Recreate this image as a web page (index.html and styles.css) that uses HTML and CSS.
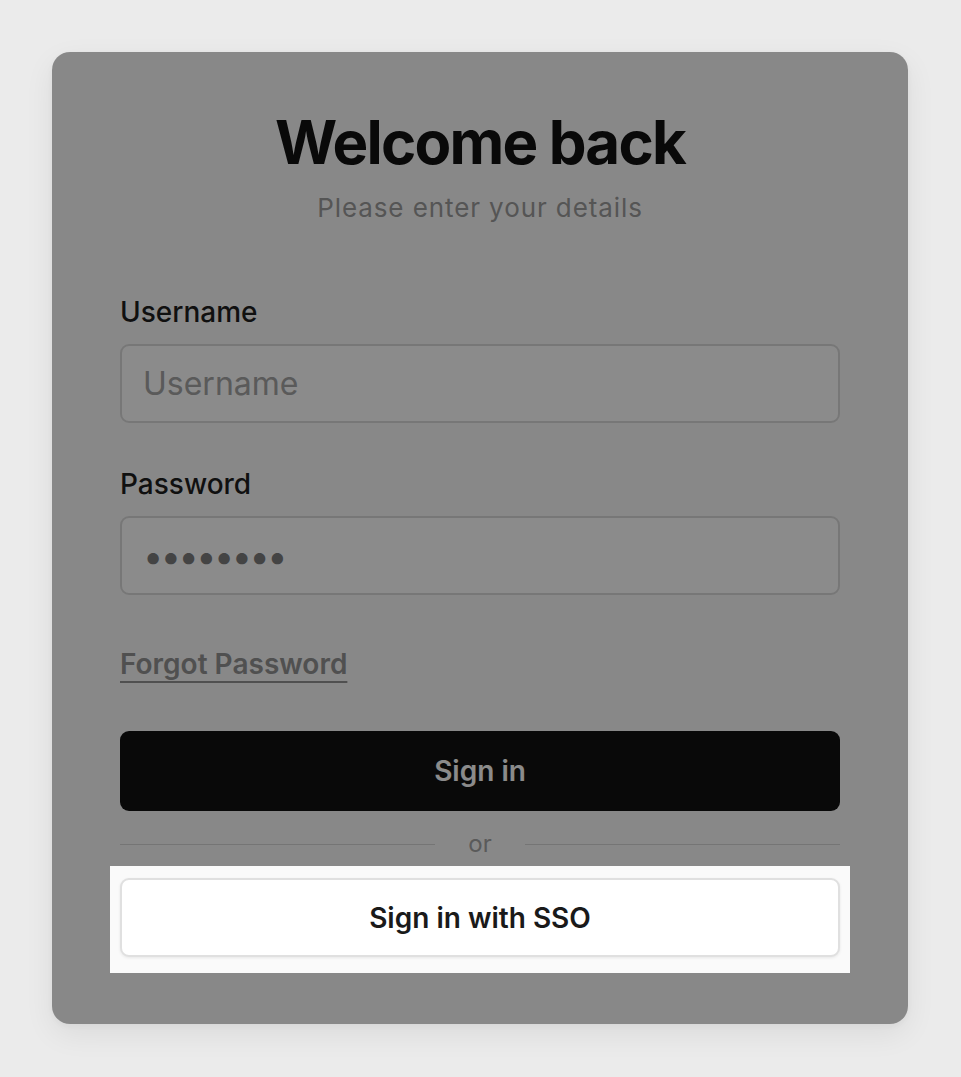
FILE: index.html
```html
<!DOCTYPE html>
<html lang="en">
<head>
<meta charset="utf-8">
<title>Welcome back</title>
<link rel="stylesheet" href="styles.css">
</head>
<body>
  <main class="card">
    <header class="head">
      <h1 class="title">Welcome back</h1>
      <p class="subtitle">Please enter your details</p>
    </header>
    <form class="form">
      <div class="field">
        <label class="label" for="username">Username</label>
        <input class="input" id="username" type="text" placeholder="Username">
      </div>
      <div class="field">
        <label class="label" for="password">Password</label>
        <input class="input input-password" id="password" type="password" value="password">
      </div>
      <a class="forgot" href="#">Forgot Password</a>
      <button class="btn btn-primary" type="button">Sign in</button>
      <div class="divider"><span class="divider-line"></span><span class="divider-text">or</span><span class="divider-line"></span></div>
      <div class="spotlight">
        <button class="btn btn-sso" type="button">Sign in with SSO</button>
      </div>
    </form>
  </main>
</body>
</html>
```
FILE: styles.css
```css
* { box-sizing: border-box; }
html, body { margin: 0; padding: 0; }
body {
  background: #ebebeb;
  font-family: Inter, "Noto Sans", "Liberation Sans", sans-serif;
  padding: 52px 53px 53px 52px;
}
.card {
  position: relative;
  background: #fafafa;
  border-radius: 18px;
  overflow: hidden;
  box-shadow: 0 10px 30px rgba(0, 0, 0, 0.07), 0 2px 6px rgba(0, 0, 0, 0.04);
  padding: 54px 68px 51px 68px;
  height: 972px;
}
.head { text-align: center; }
.title {
  margin: 0;
  font-size: 60px;
  line-height: 72px;
  font-weight: 700;
  color: #121212;
  letter-spacing: -0.03em;
}
.subtitle {
  margin: 14px 0 0;
  font-size: 26px;
  line-height: 32px;
  color: #9c9c9c;
  letter-spacing: 0.035em;
}
.form { display: flex; flex-direction: column; margin-top: 68px; }
.field { display: flex; flex-direction: column; gap: 12px; }
.field + .field { margin-top: 41px; }
.label {
  font-size: 28px;
  line-height: 40px;
  font-weight: 500;
  color: #1f1f1f;
}
.input {
  height: 79px;
  border: 2px solid #dbdbdb;
  border-radius: 9px;
  background: #fff;
  padding: 0 21px;
  font-family: inherit;
  font-size: 32px;
  color: #7d7d7d;
  outline: none;
}
.input::placeholder { color: #a5a5a5; }
.input-password { font-size: 36px; letter-spacing: -2.5px; }
.forgot {
  align-self: flex-start;
  margin-top: 49px;
  font-size: 28px;
  line-height: 40px;
  font-weight: 600;
  color: #939393;
  text-decoration: underline;
  text-decoration-thickness: 2px;
  text-underline-offset: 7px;
}
.btn {
  height: 80px;
  border-radius: 9px;
  font-family: inherit;
  font-size: 28px;
  font-weight: 600;
  cursor: pointer;
}
.btn-primary {
  margin-top: 47px;
  background: #121212;
  color: #fff;
  border: none;
}
.divider {
  display: flex;
  align-items: center;
  gap: 33px;
  margin-top: 17px;
  height: 32px;
}
.divider-line { flex: 1; height: 1px; background: #d6d6d6; }
.divider-text { font-size: 24px; line-height: 32px; color: #a5a5a5; }
.spotlight {
  position: relative;
  z-index: 1;
  margin: 6px -10px 0;
  padding: 12px 10px 16px;
  background: #fafafa;
  box-shadow: 0 0 0 2000px rgba(0, 0, 0, 0.456);
}
.btn-sso {
  width: 100%;
  height: 79px;
  background: #fff;
  color: #1a1a1a;
  border: 2px solid #e0e0e0;
  box-shadow: 0 1px 3px rgba(0, 0, 0, 0.08);
}
```
